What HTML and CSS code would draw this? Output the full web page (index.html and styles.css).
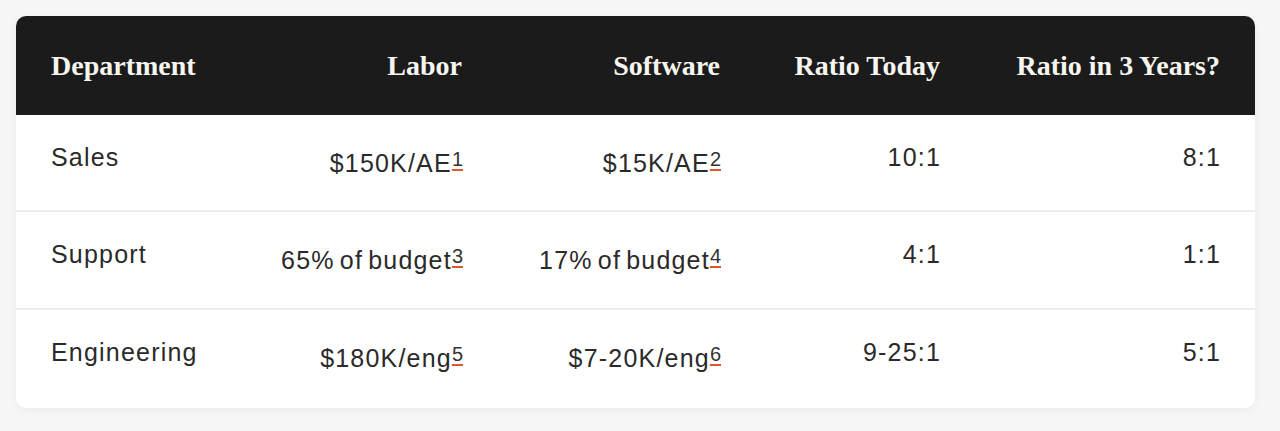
FILE: index.html
```html
<!DOCTYPE html>
<html lang="en">
<head>
<meta charset="utf-8">
<title>Labor vs Software</title>
<link rel="stylesheet" href="styles.css">
</head>
<body>
<div class="card">
  <table class="ratio-table">
    <colgroup>
      <col class="c1"><col class="c2"><col class="c3"><col class="c4"><col class="c5">
    </colgroup>
    <thead>
      <tr>
        <th class="left">Department</th>
        <th>Labor</th>
        <th>Software</th>
        <th>Ratio Today</th>
        <th>Ratio in 3 Years?</th>
      </tr>
    </thead>
    <tbody>
      <tr>
        <td class="left">Sales</td>
        <td>$150K/AE<sup class="fn">1</sup></td>
        <td>$15K/AE<sup class="fn">2</sup></td>
        <td>10:1</td>
        <td>8:1</td>
      </tr>
      <tr>
        <td class="left">Support</td>
        <td>65% of budget<sup class="fn">3</sup></td>
        <td>17% of budget<sup class="fn">4</sup></td>
        <td>4:1</td>
        <td>1:1</td>
      </tr>
      <tr>
        <td class="left">Engineering</td>
        <td>$180K/eng<sup class="fn">5</sup></td>
        <td>$7-20K/eng<sup class="fn">6</sup></td>
        <td>9-25:1</td>
        <td>5:1</td>
      </tr>
    </tbody>
  </table>
</div>
</body>
</html>
```

FILE: styles.css
```css
html, body {
  margin: 0;
  padding: 0;
  background: #f6f6f6;
}
body {
  padding: 16px 25px 23px 16px;
}
.card {
  width: 1239px;
  background: #ffffff;
  border-radius: 10px;
  overflow: hidden;
  box-shadow: 0 2px 8px rgba(0, 0, 0, 0.05);
}
.ratio-table {
  width: 100%;
  border-collapse: separate;
  border-spacing: 0;
  table-layout: fixed;
}
.c1 { width: 200px; }
.c2 { width: 281px; }
.c3 { width: 258px; }
.c4 { width: 220px; }
.c5 { width: 280px; }
.ratio-table th {
  background: #1b1b1b;
  color: #f7f5ef;
  font-family: "Liberation Serif", "Times New Roman", serif;
  font-weight: bold;
  font-size: 28px;
  height: 99px;
  padding: 0 35px;
  text-align: right;
  vertical-align: middle;
  box-sizing: border-box;
  white-space: nowrap;
}
.ratio-table td {
  font-family: "Liberation Sans", Arial, sans-serif;
  font-size: 25px;
  line-height: 1.5;
  letter-spacing: 1.2px;
  word-spacing: -3px;
  color: #2a2a2a;
  height: 98px;
  padding: 24px 34px 0 35px;
  text-align: right;
  vertical-align: top;
  box-sizing: border-box;
  white-space: nowrap;
  border-bottom: 2px solid #ededed;
}
.ratio-table tbody tr:first-child td {
  height: 97px;
}
.ratio-table tbody tr:last-child td {
  border-bottom: none;
}
.ratio-table .left {
  text-align: left;
}
.fn {
  font-size: 20px;
  line-height: 40px;
  vertical-align: 6px;
  letter-spacing: 0;
  color: #333;
  text-decoration: underline;
  text-decoration-color: #e0572c;
  text-decoration-thickness: 2px;
  text-underline-offset: 3px;
}
```
